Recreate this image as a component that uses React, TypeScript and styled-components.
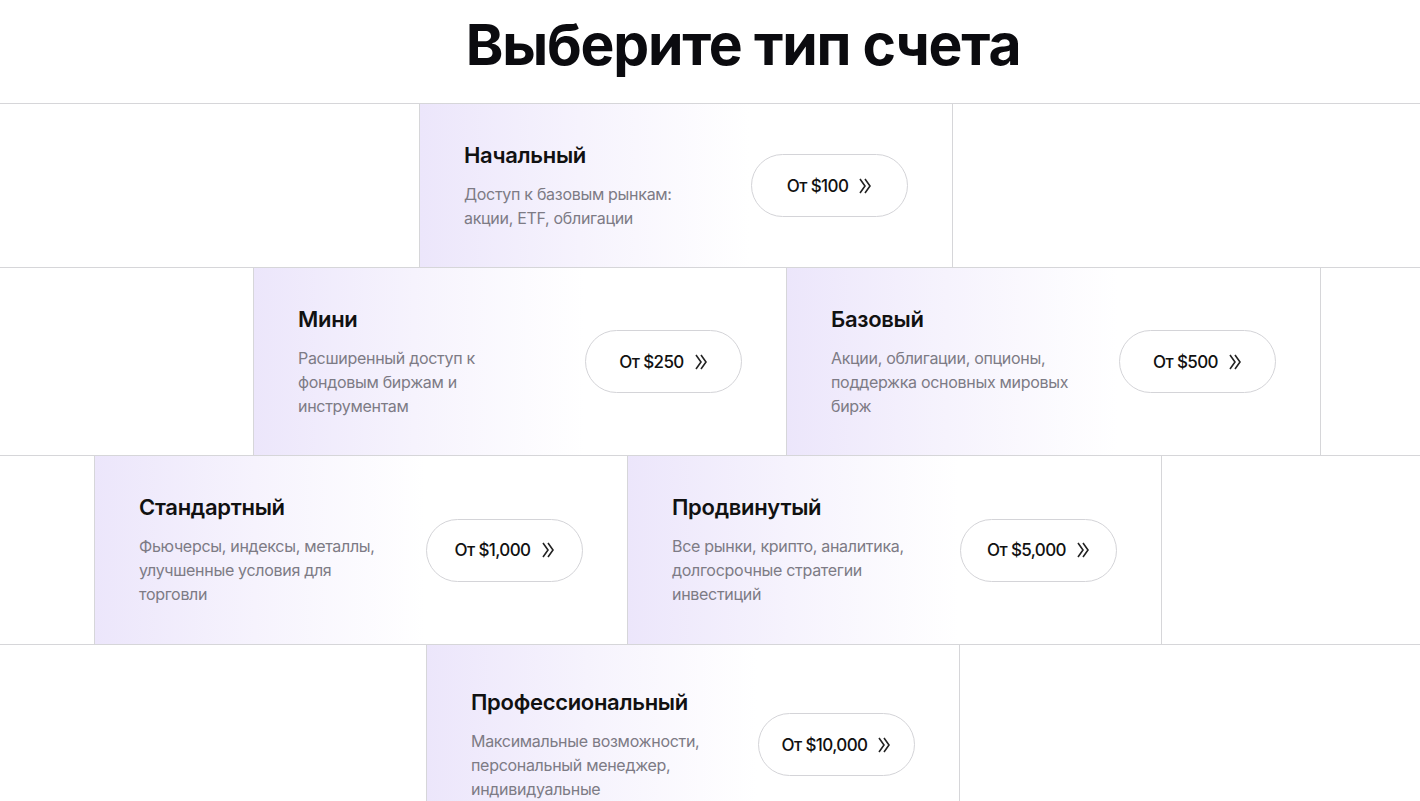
import React from "react";
import styled, { createGlobalStyle } from "styled-components";

const Global = createGlobalStyle`
  html, body { margin: 0; background: #fff; font-family: Inter, "Noto Sans", sans-serif; overflow: hidden; }
`;

const Title = styled.h1`
  margin: 0;
  height: 103px;
  display: flex;
  align-items: center;
  justify-content: center;
  font-size: 57px;
  font-weight: 700;
  letter-spacing: -1.2px;
  color: #0b0b0f;
  padding: 0 0 14px 66px;
  box-sizing: border-box;
`;

const Row = styled.div<{ $offset: number; $h: number }>`
  display: flex;
  border-top: 1px solid #d6d6d9;
  padding-left: ${(p) => p.$offset}px;
  height: ${(p) => p.$h}px;
  box-sizing: border-box;
`;

const Card = styled.div<{ $first: boolean }>`
  width: 534px;
  box-sizing: border-box;
  ${(p) => (p.$first ? "border-left: 1px solid #d6d6d9;" : "")}
  border-right: 1px solid #d6d6d9;
  background: linear-gradient(90deg, #ece6fb 0%, #f6f3fd 30%, #ffffff 62%);
  display: flex;
  align-items: center;
  justify-content: space-between;
  padding: 0 44px 0 44px;
`;

const Info = styled.div`
  display: flex;
  flex-direction: column;
  gap: 14px;
  width: 260px;
`;

const Name = styled.div`
  font-size: 22px;
  font-weight: 600;
  color: #111;
  letter-spacing: -0.3px;
`;

const Desc = styled.div`
  font-size: 16px;
  line-height: 24px;
  color: #7d7b85;
  letter-spacing: -0.3px;
`;

const Btn = styled.button`
  width: 157px;
  height: 63px;
  flex-shrink: 0;
  border-radius: 32px;
  border: 1px solid #d4d4d8;
  background: #fff;
  display: flex;
  align-items: center;
  justify-content: center;
  gap: 10px;
  font-family: Inter, sans-serif;
  font-size: 17px;
  font-weight: 500;
  letter-spacing: -0.6px;
  color: #111;
`;

const Chev = () => (
  <svg width="14" height="18" viewBox="0 0 14 18" fill="none" stroke="#222" strokeWidth="1.6">
    <path d="M2 2l5 7-5 7" />
    <path d="M7 2l5 7-5 7" />
  </svg>
);

type Item = { name: string; desc: string; price: string };

const rows: { offset: number; h: number; items: Item[] }[] = [
  { offset: 419, h: 164, items: [{ name: "Начальный", desc: "Доступ к базовым рынкам: акции, ETF, облигации", price: "От $100" }] },
  {
    offset: 253, h: 188, items: [
      { name: "Мини", desc: "Расширенный доступ к фондовым биржам и инструментам", price: "От $250" },
      { name: "Базовый", desc: "Акции, облигации, опционы, поддержка основных мировых бирж", price: "От $500" },
    ],
  },
  {
    offset: 94, h: 189, items: [
      { name: "Стандартный", desc: "Фьючерсы, индексы, металлы, улучшенные условия для торговли", price: "От $1,000" },
      { name: "Продвинутый", desc: "Все рынки, крипто, аналитика, долгосрочные стратегии инвестиций", price: "От $5,000" },
    ],
  },
  { offset: 426, h: 200, items: [{ name: "Профессиональный", desc: "Максимальные возможности, персональный менеджер, индивидуальные", price: "От $10,000" }] },
];

export default function App() {
  return (
    <>
      <Global />
      <Title>Выберите тип счета</Title>
      {rows.map((r, i) => (
        <Row key={i} $offset={r.offset} $h={r.h}>
          {r.items.map((it, j) => (
            <Card key={j} $first={j === 0}>
              <Info>
                <Name>{it.name}</Name>
                <Desc>{it.desc}</Desc>
              </Info>
              <Btn>
                {it.price}
                <Chev />
              </Btn>
            </Card>
          ))}
        </Row>
      ))}
    </>
  );
}
